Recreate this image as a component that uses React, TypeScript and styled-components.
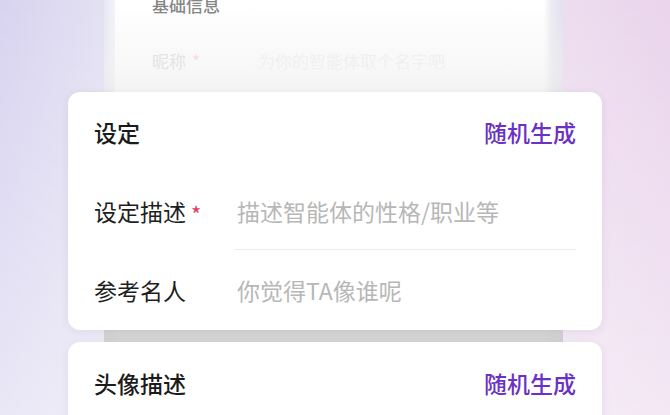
import React from "react";
import styled, { createGlobalStyle } from "styled-components";

const Global = createGlobalStyle`
  html, body { margin: 0; padding: 0; }
  body {
    font-family: "Noto Sans CJK SC", "Noto Sans", sans-serif;
    -webkit-font-smoothing: antialiased;
  }
`;

const Page = styled.div`
  width: 670px;
  height: 415px;
  overflow: hidden;
  display: grid;
  grid-template-columns: 1fr;
  grid-template-rows: 1fr;
  background:
    linear-gradient(180deg, rgba(255, 255, 255, 0) 0%, rgba(255, 255, 255, 0.45) 100%),
    linear-gradient(90deg, #d8d3f0 0%, #e3e0f2 15%, #ece8f0 40%, #eee2f0 75%, #ead4ec 100%);
`;

const BackSheet = styled.div`
  grid-area: 1 / 1;
  margin-left: 104px;
  width: 459px;
  height: 415px;
  display: flex;
  flex-direction: column;
  padding-left: 48px;
  box-sizing: border-box;
  background:
    linear-gradient(
      180deg,
      rgba(240, 240, 240, 0) 0px,
      rgba(240, 240, 240, 0.5) 70px,
      rgba(215, 215, 215, 0.85) 220px,
      rgba(208, 208, 208, 0.9) 330px
    ),
    linear-gradient(
      90deg,
      #e6e6f5 0,
      #f4f4fa 11px,
      #ffffff 11px,
      #ffffff 440px,
      #ecebf2 447px,
      #e2dfee 459px
    );
`;

const BackTitle = styled.div`
  margin-top: -7px;
  font-size: 17px;
  line-height: 24px;
  color: #858585;
  font-weight: 500;
`;

const BackRow = styled.div`
  margin-top: 28px;
  display: flex;
  align-items: center;
  height: 30px;
  font-size: 17px;
`;

const BackLabel = styled.div`
  width: 106px;
  color: #e4e4e4;
`;

const BackStar = styled.span`
  color: #f6dde4;
  margin-left: 6px;
`;

const BackPlaceholder = styled.div`
  color: #f0f0f0;
`;

const Front = styled.div`
  grid-area: 1 / 1;
  display: flex;
  flex-direction: column;
  gap: 12px;
  padding: 92px 68px 0;
`;

const Card = styled.div<{ $h?: number }>`
  background: #ffffff;
  border-radius: 12px;
  box-shadow: 0 2px 10px rgba(60, 40, 90, 0.08);
  padding: 0 26px;
  display: flex;
  flex-direction: column;
  flex-shrink: 0;
  height: ${(p) => (p.$h ? `${p.$h}px` : "auto")};
`;

const Header = styled.div<{ $top: number }>`
  margin-top: ${(p) => p.$top}px;
  height: 40px;
  display: flex;
  align-items: center;
  justify-content: space-between;
`;

const Title = styled.div`
  font-size: 23px;
  font-weight: 500;
  color: #1b1b1b;
`;

const Action = styled.div`
  font-size: 23px;
  font-weight: 500;
  color: #6a31c4;
`;

const Rows = styled.div`
  margin-top: 20px;
  display: flex;
  flex-direction: column;
`;

const Row = styled.div<{ $h: number }>`
  height: ${(p) => p.$h}px;
  display: flex;
  align-items: stretch;
`;

const Label = styled.div`
  width: 140px;
  flex-shrink: 0;
  display: flex;
  align-items: center;
  font-size: 23px;
  color: #1e1e1e;
`;

const Star = styled.span`
  color: #e03a5e;
  font-size: 22px;
  margin-left: 5px;
  margin-top: 4px;
`;

const Field = styled.div<{ $line?: boolean }>`
  flex: 1;
  display: flex;
  align-items: center;
  padding-left: 3px;
  font-size: 23px;
  color: #b7b7b7;
  border-bottom: ${(p) => (p.$line ? "1.5px solid #ececec" : "none")};
  box-sizing: border-box;
`;

export default function App() {
  return (
    <>
      <Global />
      <Page>
        <BackSheet>
          <BackTitle>基础信息</BackTitle>
          <BackRow>
            <BackLabel>
              昵称<BackStar>*</BackStar>
            </BackLabel>
            <BackPlaceholder>为你的智能体取个名字吧</BackPlaceholder>
          </BackRow>
        </BackSheet>
        <Front>
          <Card $h={238}>
            <Header $top={20}>
              <Title>设定</Title>
              <Action>随机生成</Action>
            </Header>
            <Rows>
              <Row $h={78}>
                <Label>
                  设定描述<Star>*</Star>
                </Label>
                <Field $line>描述智能体的性格/职业等</Field>
              </Row>
              <Row $h={80}>
                <Label>参考名人</Label>
                <Field>你觉得TA像谁呢</Field>
              </Row>
            </Rows>
          </Card>
          <Card $h={120}>
            <Header $top={21}>
              <Title>头像描述</Title>
              <Action>随机生成</Action>
            </Header>
          </Card>
        </Front>
      </Page>
    </>
  );
}
